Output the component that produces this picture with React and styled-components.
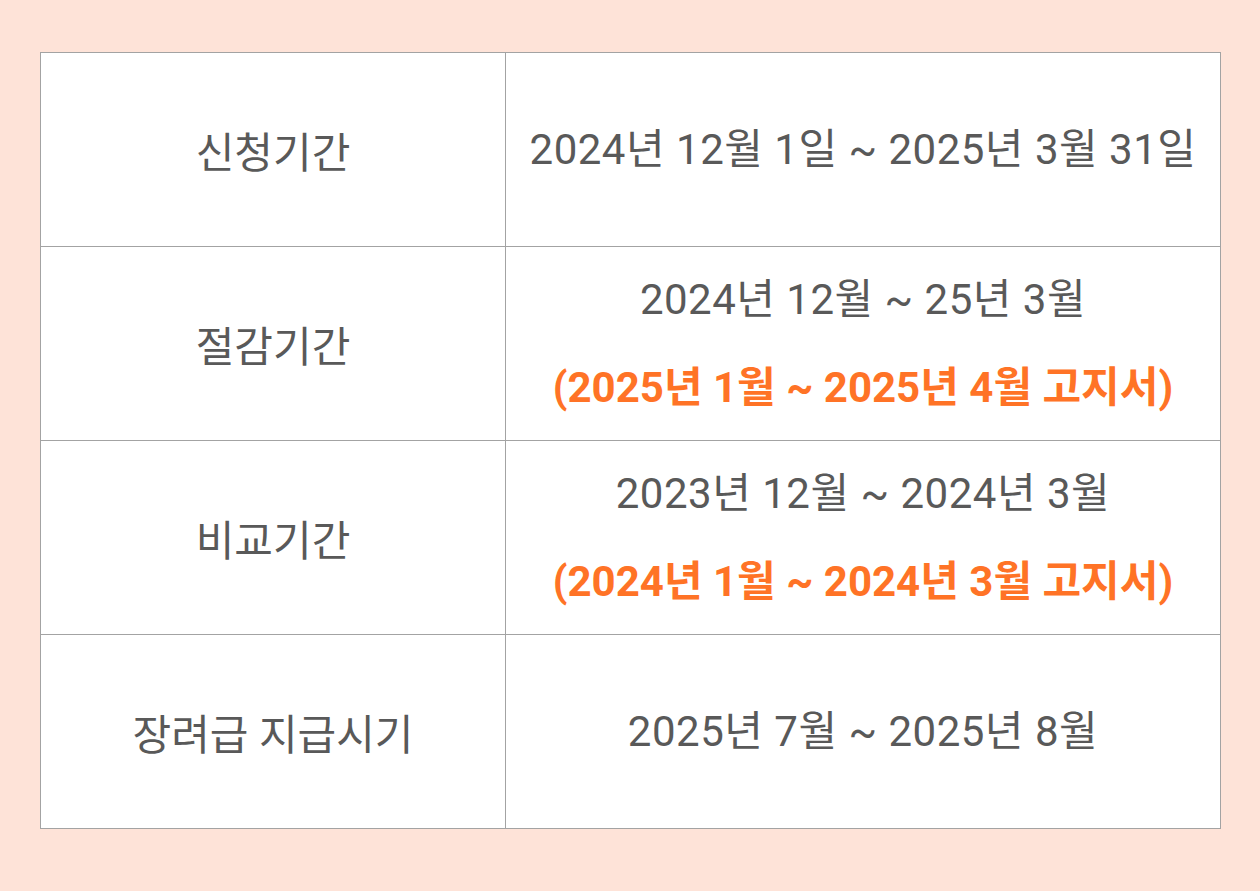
import styled, { createGlobalStyle } from "styled-components";

const GlobalStyle = createGlobalStyle`
  body {
    margin: 0;
    background: #fee3d8;
    font-family: Roboto, "Noto Sans CJK KR", sans-serif;
  }
`;

const rows = [
  { label: "신청기간", lines: ["2024년 12월 1일 ~ 2025년 3월 31일"] },
  { label: "절감기간", lines: ["2024년 12월 ~ 25년 3월"], note: "(2025년 1월 ~ 2025년 4월 고지서)" },
  { label: "비교기간", lines: ["2023년 12월 ~ 2024년 3월"], note: "(2024년 1월 ~ 2024년 3월 고지서)" },
  { label: "장려급 지급시기", lines: ["2025년 7월 ~ 2025년 8월"] },
];

export default function App() {
  return (
    <Page>
      <GlobalStyle />
      <Table>
        {rows.map((row, i) => (
          <Row key={i} last={i === rows.length - 1}>
            <LabelCell>{row.label}</LabelCell>
            <ValueCell>
              {row.lines.map((l, j) => (
                <Text key={j}>{l}</Text>
              ))}
              {row.note && <Note>{row.note}</Note>}
            </ValueCell>
          </Row>
        ))}
      </Table>
    </Page>
  );
}

const Page = styled.div`
  width: 1260px;
  height: 891px;
  padding: 52px 0 0 40px;
  box-sizing: border-box;
`;

const Table = styled.div`
  width: 1181px;
  background: #fff;
  border: 1px solid #a3a3a3;
  box-sizing: border-box;
`;

const Row = styled.div`
  display: grid;
  grid-template-columns: 465px 1fr;
  height: ${(p) => (p.last ? "193px" : "194px")};
  border-bottom: ${(p) => (p.last ? "none" : "1px solid #a3a3a3")};
  box-sizing: border-box;
`;

const LabelCell = styled.div`
  display: flex;
  align-items: center;
  justify-content: center;
  border-right: 1px solid #a3a3a3;
  font-size: 42px;
  font-weight: 400;
  color: #595959;
`;

const ValueCell = styled.div`
  display: flex;
  flex-direction: column;
  align-items: center;
  justify-content: center;
  gap: 36px;
`;

const Text = styled.div`
  font-size: 42px;
  font-weight: 400;
  letter-spacing: 0.5px;
  line-height: 52px;
  color: #595959;
`;

const Note = styled(Text)`
  font-weight: 700;
  letter-spacing: 0;
  color: #ff7326;
`;
